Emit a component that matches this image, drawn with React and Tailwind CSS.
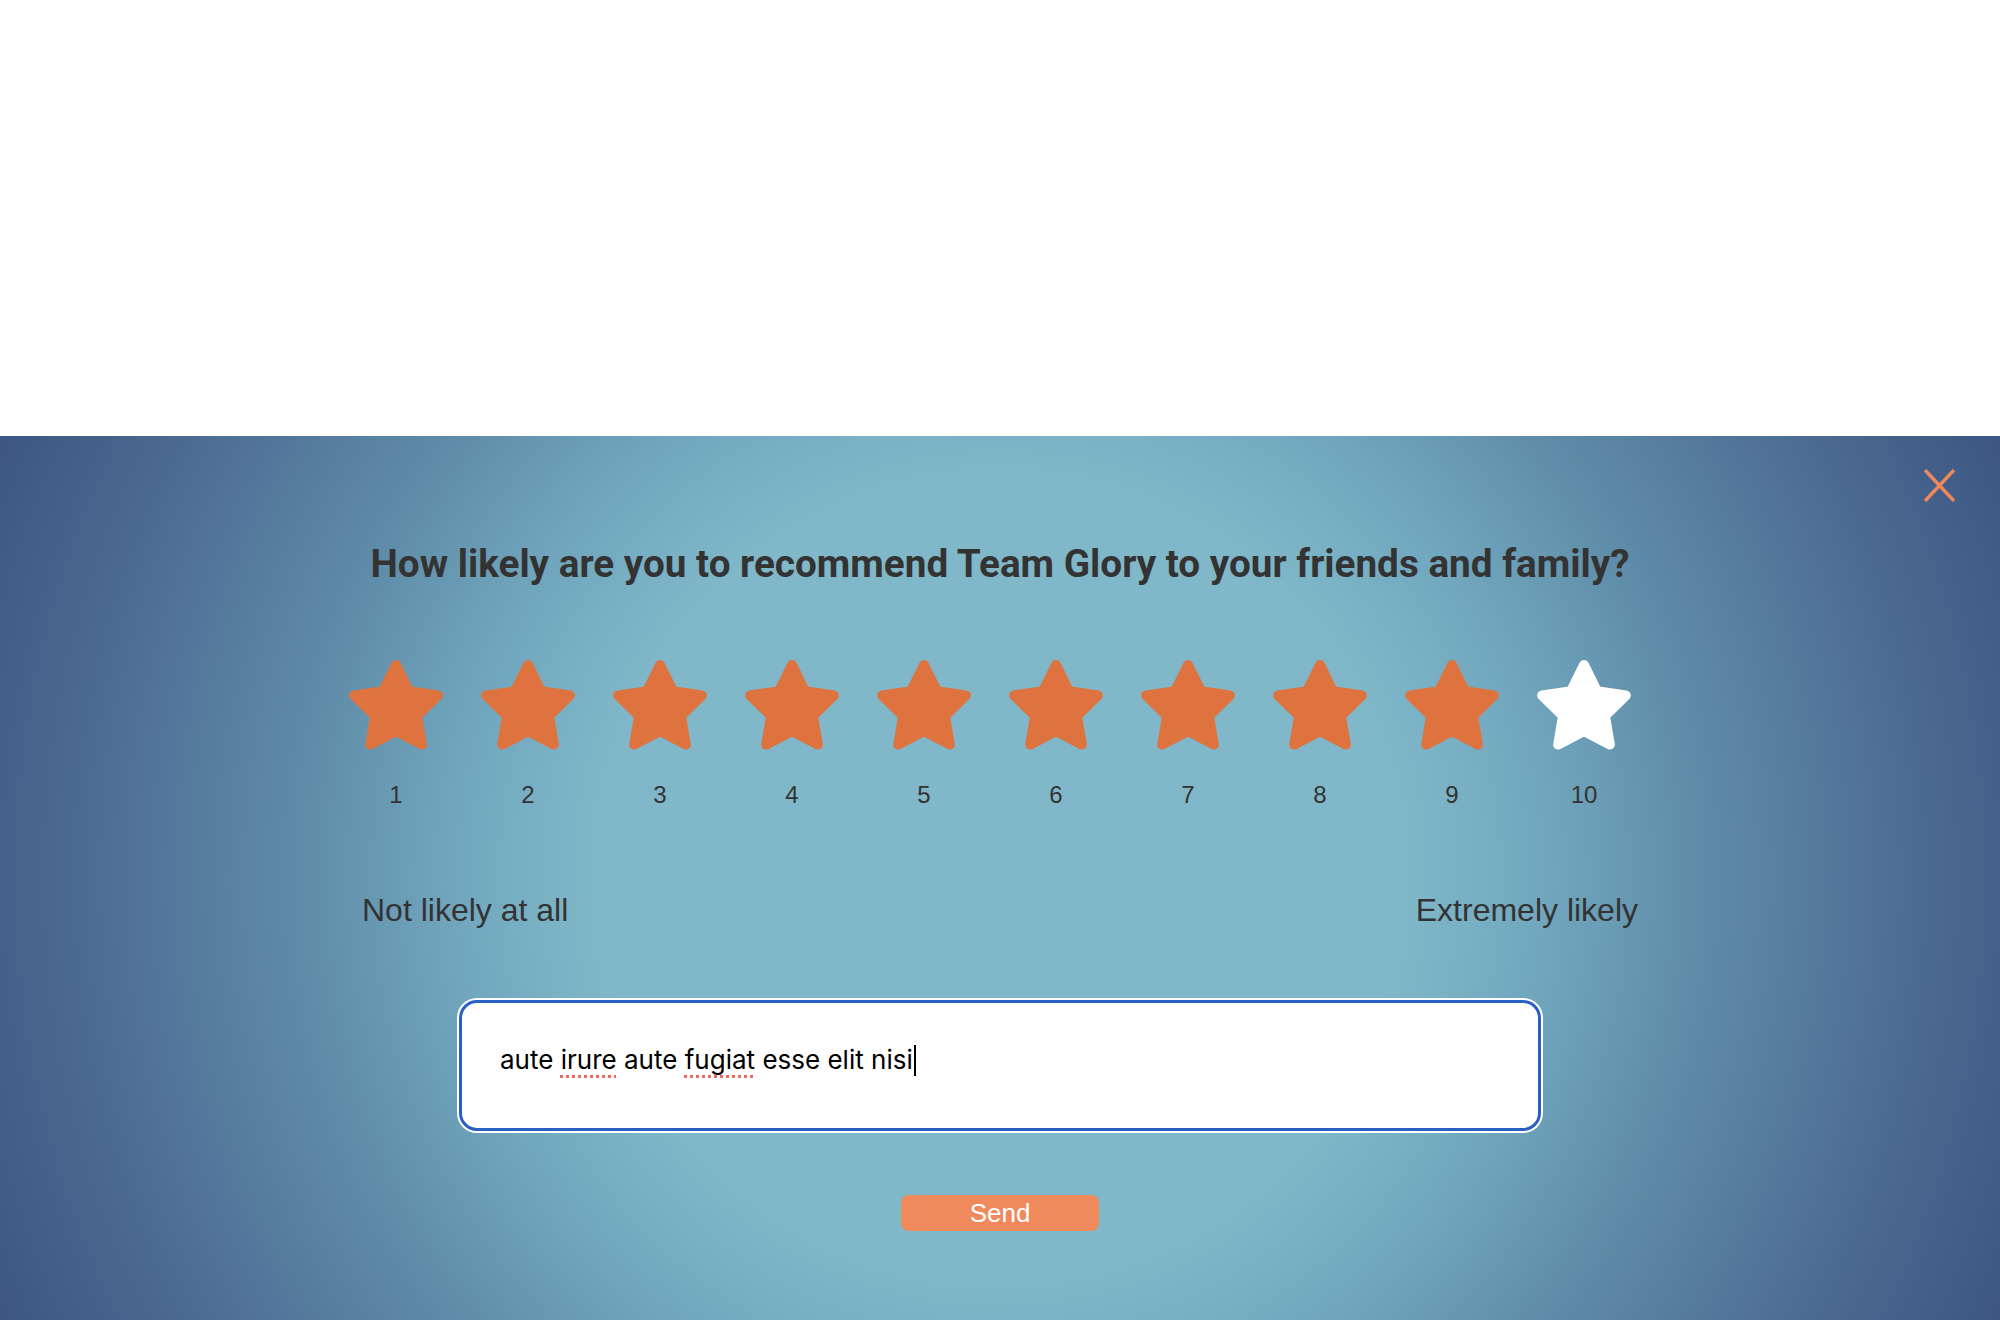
import React from "react";

// 10-point scale; the first nine are filled, the last one is left white.
const SCORES = [1, 2, 3, 4, 5, 6, 7, 8, 9, 10];
const SELECTED = 9;

const starPoints = (() => {
  const pts = [];
  for (let i = 0; i < 10; i++) {
    const r = i % 2 === 0 ? 44 : 22;
    const a = -Math.PI / 2 + (i * Math.PI) / 5;
    pts.push(`${(48 + r * Math.cos(a)).toFixed(2)},${(53 + r * Math.sin(a)).toFixed(2)}`);
  }
  return pts.join(" ");
})();

const Star = ({ filled }) => {
  const color = filled ? "#df7340" : "#ffffff";
  return (
    <svg width="96" height="96" viewBox="0 0 96 96" aria-hidden="true">
      <polygon
        points={starPoints}
        fill={color}
        stroke={color}
        strokeWidth="10"
        strokeLinejoin="round"
      />
    </svg>
  );
};

const App = () => {
  return (
    <div className="w-full bg-white">
      <div className="h-[436px]" />
      <section className="relative h-[884px] bg-[radial-gradient(circle_at_50%_50%,#80b8c9_0px,#80b8c9_400px,#72a8bf_536px,#5f8ca8_700px,#4a6890_940px,#3d5683_1093px)] pt-[105px]">
        <button
          type="button"
          aria-label="Close"
          className="absolute right-[45px] top-[33px] h-[33px] w-[31px]"
        >
          <svg width="31" height="33" viewBox="0 0 31 33">
            <path d="M1 1 L30 32 M30 1 L1 32" stroke="#f0895a" strokeWidth="3.4" fill="none" />
          </svg>
        </button>

        <h2 className="text-center font-['Roboto',sans-serif] text-[38.7px] font-bold leading-[46px] text-[#333333]">
          How likely are you to recommend Team Glory to your friends and family?
        </h2>

        <div className="mx-auto mt-[69px] grid w-[1340px] grid-cols-10 pr-[20px]">
          {SCORES.map((n) => (
            <div key={n} className="flex flex-col items-center">
              <Star filled={n <= SELECTED} />
              <span className="mt-[27px] font-['Liberation_Sans',Arial,sans-serif] text-[24px] leading-[32px] text-[#333333]">
                {n}
              </span>
            </div>
          ))}
        </div>

        <div className="mx-auto mt-[79px] flex w-[1276px] justify-between font-['Liberation_Sans',Arial,sans-serif] text-[32px] leading-[40px] text-[#333333]">
          <span>Not likely at all</span>
          <span>Extremely likely</span>
        </div>

        <div className="mx-auto mt-[70px] h-[131px] w-[1082px] rounded-[18px] border-[3px] border-[#2a5fc4] bg-white pl-[38px] pt-[41px] ring-2 ring-white">
          <p className="flex items-center font-['Inter',sans-serif] text-[26px] leading-[32px] text-black">
            <span className="whitespace-pre">aute </span>
            <span className="underline decoration-[#ee6a5f] decoration-dotted decoration-[3px] underline-offset-[6px]">irure</span>
            <span className="whitespace-pre"> aute </span>
            <span className="underline decoration-[#ee6a5f] decoration-dotted decoration-[3px] underline-offset-[6px]">fugiat</span>
            <span className="whitespace-pre"> esse elit nisi</span>
            <span className="ml-[1px] inline-block h-[31px] w-[2px] bg-black" />
          </p>
        </div>

        <div className="mt-[64px] flex justify-center">
          <button
            type="button"
            className="h-[36px] w-[198px] rounded-[8px] bg-[#f08a5d] font-['Liberation_Sans',Arial,sans-serif] text-[26px] leading-[36px] text-white"
          >
            Send
          </button>
        </div>
      </section>
    </div>
  );
};

export default App;
